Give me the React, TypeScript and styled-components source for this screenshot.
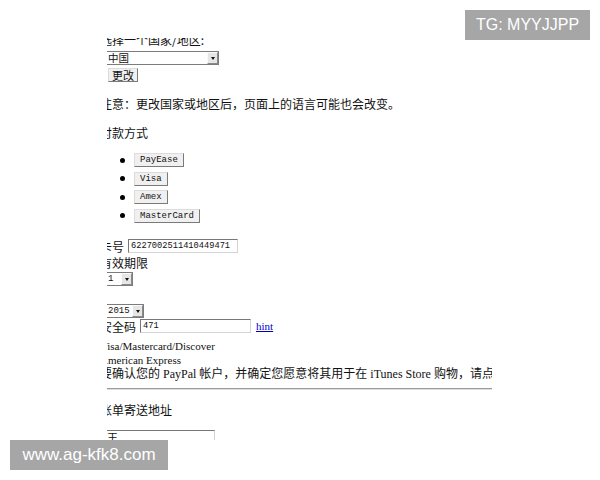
import React from 'react';
import styled, { createGlobalStyle } from 'styled-components';

const Global = createGlobalStyle`
  html, body { margin: 0; padding: 0; background: #fff; }
  body { font-family: "Noto Sans CJK SC", sans-serif; }
`;

const Page = styled.div`
  position: relative;
  width: 600px;
  height: 480px;
  padding: 38px 0 0 107px;
  box-sizing: border-box;
  overflow: hidden;
`;

const Frame = styled.div`
  width: 385px;
  height: 402px;
  overflow: hidden;
`;

const Content = styled.div`
  margin: -6px 0 0 -7px;
  width: 392px;
  color: #111;
  font-family: "Liberation Serif", "Noto Sans CJK SC", serif;
`;

const Line = styled.div<{ $mt?: number; $lh?: number; $size?: number; $cjk?: boolean }>`
  margin-top: ${(p) => p.$mt ?? 0}px;
  font-size: ${(p) => p.$size ?? 12}px;
  line-height: ${(p) => p.$lh ?? 15}px;
  height: ${(p) => p.$lh ?? 15}px;
  white-space: nowrap;
  font-family: ${(p) =>
    p.$cjk ? '"Noto Sans CJK SC", sans-serif' : '"Liberation Serif", "Noto Sans CJK SC", serif'};
`;

const SelectBox = styled.div<{ $w: number; $mt?: number }>`
  display: flex;
  box-sizing: border-box;
  width: ${(p) => p.$w}px;
  height: 14px;
  margin: ${(p) => p.$mt ?? 0}px 0 0 4px;
  border: 1px solid #7c7c7c;
  background: #fff;
`;

const SelectValue = styled.span<{ $mono?: boolean }>`
  flex: 1;
  padding-left: 3px;
  font-size: ${(p) => (p.$mono ? 9 : 10.5)}px;
  line-height: 12px;
  font-family: ${(p) =>
    p.$mono ? '"Liberation Mono", monospace' : '"Noto Sans CJK SC", sans-serif'};
  color: #111;
`;

const SelectArrow = styled.span`
  display: flex;
  align-items: center;
  justify-content: center;
  box-sizing: border-box;
  width: 11px;
  height: 12px;
  border: 1px solid;
  border-color: #fafafa #8a8a8a #8a8a8a #fafafa;
  background: #e6e6e6;
  &::after {
    content: '';
    border-left: 2.5px solid transparent;
    border-right: 2.5px solid transparent;
    border-top: 3px solid #111;
  }
`;

const PlainButton = styled.button<{ $cjk?: boolean; $mt?: number; $ml?: number }>`
  display: block;
  box-sizing: border-box;
  height: 14px;
  margin: ${(p) => p.$mt ?? 0}px 0 0 ${(p) => p.$ml ?? 0}px;
  padding: 0 ${(p) => (p.$cjk ? 3 : 5)}px;
  border: 1px solid;
  border-color: #dcdcdc #7a7a7a #7a7a7a #dcdcdc;
  background: #f0f0f0;
  color: #111;
  font-size: ${(p) => (p.$cjk ? 11 : 9)}px;
  line-height: 12px;
  font-family: ${(p) =>
    p.$cjk ? '"Noto Sans CJK SC", sans-serif' : '"Liberation Mono", monospace'};
`;

const MethodList = styled.ul`
  list-style: none;
  margin: 13px 0 0;
  padding: 0 0 0 20px;
  display: flex;
  flex-direction: column;
  gap: 4.5px;
`;

const MethodItem = styled.li`
  display: flex;
  align-items: center;
  gap: 9px;
  height: 14px;
`;

const Bullet = styled.span`
  width: 5px;
  height: 5px;
  border-radius: 50%;
  background: #000;
`;

const FieldRow = styled.div<{ $mt?: number }>`
  display: flex;
  align-items: center;
  gap: 4px;
  height: 14px;
  margin-top: ${(p) => p.$mt ?? 0}px;
  font-size: 12px;
  font-family: "Noto Sans CJK SC", sans-serif;
  white-space: nowrap;
`;

const TextInput = styled.div<{ $w: number; $mt?: number; $ml?: number; $cjk?: boolean }>`
  box-sizing: border-box;
  width: ${(p) => p.$w}px;
  height: 14px;
  margin: ${(p) => p.$mt ?? 0}px 0 0 ${(p) => p.$ml ?? 0}px;
  padding-left: 2px;
  border: 1px solid;
  border-color: #777 #d4d4d4 #d4d4d4 #777;
  background: #fff;
  color: #111;
  font-size: ${(p) => (p.$cjk ? 11 : 8.7)}px;
  line-height: 12px;
  font-family: ${(p) =>
    p.$cjk ? '"Noto Sans CJK SC", sans-serif' : '"Liberation Mono", monospace'};
  overflow: hidden;
`;

const HintLink = styled.a`
  margin-left: 1px;
  color: #0000cc;
  font-family: "Liberation Serif", serif;
  font-size: 11px;
  text-decoration: underline;
`;

const Rule = styled.hr`
  margin: 7px 0 0;
  height: 0;
  border: 0;
  border-top: 1px solid #9a9a9a;
  border-bottom: 1px solid #dedede;
`;

const Stamp = styled.div<{ $left: number; $top: number; $w: number; $size: number }>`
  position: absolute;
  left: ${(p) => p.$left}px;
  top: ${(p) => p.$top}px;
  width: ${(p) => p.$w}px;
  height: 30px;
  display: flex;
  align-items: center;
  justify-content: center;
  background: #a6a6a6;
  color: #fff;
  font-family: "Liberation Sans", Arial, sans-serif;
  font-size: ${(p) => p.$size}px;
  white-space: nowrap;
`;

const methods = ['PayEase', 'Visa', 'Amex', 'MasterCard'];

export default function App() {
  return (
    <Page>
      <Global />
      <Frame>
        <Content>
          <Line $cjk>选择一个国家/地区:</Line>
          <SelectBox $w={115} $mt={4}>
            <SelectValue>中国</SelectValue>
            <SelectArrow />
          </SelectBox>
          <PlainButton $cjk $mt={3} $ml={8}>更改</PlainButton>
          <Line $cjk $mt={14}>注意：更改国家或地区后，页面上的语言可能也会改变。</Line>
          <Line $cjk $mt={14}>付款方式</Line>
          <MethodList>
            {methods.map((m) => (
              <MethodItem key={m}>
                <Bullet />
                <PlainButton>{m}</PlainButton>
              </MethodItem>
            ))}
          </MethodList>
          <FieldRow $mt={16.5}>
            卡号
            <TextInput $w={110}>6227002511410449471</TextInput>
          </FieldRow>
          <Line $cjk $mt={2}>有效期限</Line>
          <SelectBox $w={29} $mt={2}>
            <SelectValue $mono>1</SelectValue>
            <SelectArrow />
          </SelectBox>
          <SelectBox $w={40} $mt={18}>
            <SelectValue $mono>2015</SelectValue>
            <SelectArrow />
          </SelectBox>
          <FieldRow $mt={1}>
            安全码
            <TextInput $w={111}>471</TextInput>
            <HintLink href="#">hint</HintLink>
          </FieldRow>
          <Line $size={11} $lh={14} $mt={6}>Visa/Mastercard/Discover</Line>
          <Line $size={11} $lh={14}>American Express</Line>
          <Line $size={12} $lh={14}>
            要确认您的 PayPal 帐户，并确定您愿意将其用于在 iTunes Store 购物，请点击此处。
          </Line>
          <Rule />
          <Line $cjk $mt={12}>账单寄送地址</Line>
          <TextInput $cjk $w={111} $mt={13} $ml={4}>王</TextInput>
        </Content>
      </Frame>
      <Stamp $left={465} $top={10} $w={125} $size={16}>TG: MYYJJPP</Stamp>
      <Stamp $left={10} $top={440} $w={158} $size={17}>www.ag-kfk8.com</Stamp>
    </Page>
  );
}
